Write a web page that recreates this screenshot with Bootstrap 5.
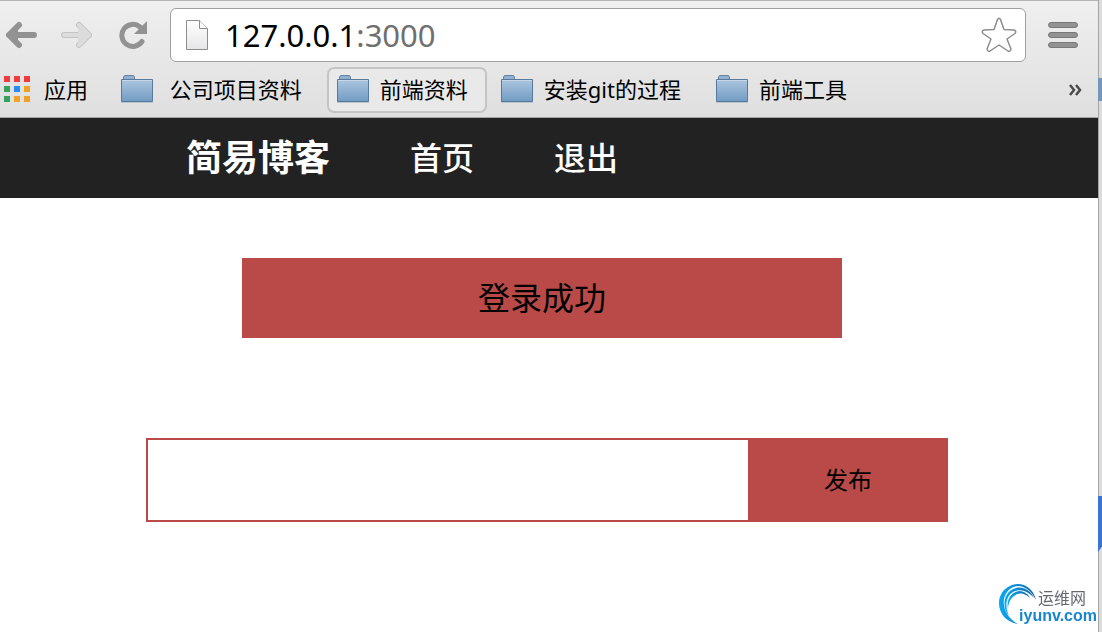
<!DOCTYPE html>
<html lang="zh-CN">
<head>
<meta charset="utf-8">
<meta name="viewport" content="width=device-width, initial-scale=1">
<title>简易博客</title>
<link href="https://cdn.jsdelivr.net/npm/bootstrap@5.3.0/dist/css/bootstrap.min.css" rel="stylesheet">
<style>
  body { font-family: "Noto Sans", "Noto Sans CJK SC", sans-serif; color: #000; background: #fff; }
  svg { display: block; flex: none; }
  .chrome { background: linear-gradient(#efefef, #dfdfdf); border-top: 1px solid #b5b5b5; border-bottom: 1px solid #a5a5a5; }
  .tools { height: 66px; padding: 6px 20px 4px 5px; }
  .tool-btn { border: 0; background: none; padding: 0; }
  .tool-forward { margin-left: 21px; }
  .tool-reload { margin-left: 25px; }
  .omnibox { height: 54px; border: 1px solid #a0a0a0; border-radius: 6px; background: #fff; margin: 0 22px; padding: 0 8px 0 14px; }
  .address { font-size: 31px; line-height: 52px; margin-left: 16px; }
  .port { color: #707070; }
  .bookmarks { height: 50px; padding-bottom: 4px; font-size: 22px; line-height: 32px; }
  .bookmark { height: 46px; padding: 0 19px 3px 8px; gap: 11px; border: 2px solid transparent; border-radius: 7px; color: #000; text-decoration: none; white-space: nowrap; }
  .bookmark.hot { border-color: #c4c4c4; background: #e9e9e9; padding-right: 17px; }
  .bookmark.apps { padding-left: 2px; padding-right: 17px; gap: 14px; }
  .site-nav { background: #222; height: 80px; padding: 0 186px; gap: 80px; }
  .site-nav a { color: #fff; text-decoration: none; font-size: 32px; font-weight: 500; white-space: nowrap; }
  .site-nav .site-name { font-size: 36px; font-weight: 700; }
  .notice-row { padding: 60px 14px 0 0; }
  .notice { width: 100%; max-width: 600px; height: 80px; background: #b94a48; font-size: 32px; }
  .post-row { padding: 100px 4px 0 0; }
  .post { width: 100%; max-width: 802px; height: 84px; }
  .post input { min-width: 0; border: 2px solid #b94a48; border-right: 0; border-radius: 0; padding: 0 16px; font-size: 24px; outline: 0; }
  .post button { width: 200px; border: 0; background: #b94a48; color: #000; font-size: 24px; }
  .edge { width: 4px; background: linear-gradient(90deg, #a5a5a5 1px, #dcdcdc 1px); }
  .edge-top { height: 78px; }
  .edge-folder { height: 23px; background: #7197bd; }
  .edge-gap { height: 395px; }
  .edge-blue { height: 56px; background: #3b73d1; clip-path: polygon(0 0, 100% 0, 100% 90%, 0 100%); }
  .watermark { right: 5px; bottom: 7px; }
  .swirl { left: -20px; bottom: 0; }
  .mark-cn { padding-right: 11px; font-size: 16px; line-height: 18px; color: #666870; }
  .mark-url { font: bold 16px/18px "Liberation Sans", sans-serif; color: #1785d1; }
</style>
</head>
<body>
<svg width="0" height="0" class="position-absolute" aria-hidden="true">
  <defs>
    <linearGradient id="folderFill" x2="0" y2="1"><stop stop-color="#adc6df"/><stop offset="1" stop-color="#729bc3"/></linearGradient>
    <linearGradient id="pageFill" x2="0" y2="1"><stop stop-color="#fff"/><stop offset="1" stop-color="#e6e6e8"/></linearGradient>
    <linearGradient id="swirlFill" x2="1"><stop stop-color="#08a9f4"/><stop offset="1" stop-color="#1566a9"/></linearGradient>
    <symbol id="folder" viewBox="0 0 32 28"><path d="M2.500 5V2l1-1.500h9l1 1.500v3" fill="#91afd1" stroke="#66829f"/><path d="M.5 4.500h31v22H.5z" fill="url(#folderFill)" stroke="#56799c"/><path d="M1 5.500h30" stroke="#c6d8e9"/><path d="M0 27.500h32" stroke="#bbc3cb"/></symbol>
  </defs>
</svg>
<div class="d-flex min-vh-100 overflow-hidden">
  <div class="flex-grow-1 position-relative">
    <header class="chrome">
      <div class="tools d-flex align-items-center">
        <button class="tool-btn" type="button" aria-label="后退"><svg width="34" height="30" viewBox="0 0 34 30" fill="none" stroke="#929292" stroke-width="6" stroke-linecap="round" stroke-linejoin="round"><path d="M4 15h25M14 5 4 15l10 10"/><path d="M4 15 13 6v18z" fill="#929292" stroke="none"/></svg></button>
        <button class="tool-btn tool-forward" type="button" aria-label="前进"><svg width="34" height="30" viewBox="0 0 34 30" fill="none" stroke-linecap="round" stroke-linejoin="round"><path d="M4 15h25M19 5l10 10-10 10" stroke="#c4c4c4" stroke-width="6"/><path d="M4 15h25M19 5l10 10-10 10" stroke="#dcdcdc" stroke-width="4"/><path d="m18 7 9 8-9 8z" fill="#dcdcdc"/></svg></button>
        <button class="tool-btn tool-reload" type="button" aria-label="重新加载"><svg width="29" height="30" viewBox="0 0 29 30"><path d="M23 21.500A11 11 0 1 1 21 7" fill="none" stroke="#929292" stroke-width="5" stroke-linecap="round"/><path d="M28 1v13H15z" fill="#929292"/></svg></button>
        <div class="omnibox d-flex align-items-center flex-grow-1">
          <svg width="24" height="32" viewBox="0 0 24 32"><path d="M1.500 1.500h13l8 8v21h-21z" fill="url(#pageFill)" stroke="#8d8d8d"/><path d="M14.500 1.500v8h8" fill="#fff" stroke="#8d8d8d"/></svg>
          <span class="address flex-grow-1">127.0.0.1<span class="port">:3000</span></span>
          <button class="tool-btn" type="button" aria-label="收藏"><svg width="36" height="36" viewBox="0 0 36 36"><path d="M16.500 2.500Q18 0 19.500 2.500L23 12.500 33 13Q36 14 34 16.500L26 22 30 32Q29.500 35 27 34L18 28 9 34Q6.500 35 6 32L10 22 2 16.500Q0 14 3 13L13 12.500z" fill="#fff" stroke="#8d8d8d" stroke-width="1.500" stroke-linejoin="round"/></svg></button>
        </div>
        <button class="tool-btn" type="button" aria-label="菜单"><svg width="30" height="28" viewBox="0 0 30 28" stroke="#787878" fill="#929292"><rect x=".5" y="1.500" width="29" height="5" rx="2.500"/><rect x=".5" y="11.500" width="29" height="5" rx="2.500"/><rect x=".5" y="21.500" width="29" height="5" rx="2.500"/></svg></button>
      </div>
      <nav class="bookmarks d-flex align-items-center gap-1" aria-label="书签">
        <a class="bookmark apps d-flex align-items-center" href="#"><svg width="26" height="26" viewBox="0 0 26 26"><path fill="#ef3b3b" d="M0 0h6v6H0zM10 0h6v6h-6zM20 0h6v6h-6z"/><path fill="#35a15b" d="M0 10h6v6H0zM0 20h6v6H0z"/><path fill="#278cf0" d="M10 10h6v6h-6z"/><path fill="#f0a126" d="M20 10h6v6h-6zM10 20h6v6h-6zM20 20h6v6h-6z"/></svg>应用</a>
        <a class="bookmark d-flex align-items-center" href="#"><svg width="32" height="28"><use href="#folder"/></svg><span>&nbsp;公司项目资料</span></a>
        <a class="bookmark hot d-flex align-items-center" href="#"><svg width="32" height="28"><use href="#folder"/></svg>前端资料</a>
        <a class="bookmark d-flex align-items-center" href="#"><svg width="32" height="28"><use href="#folder"/></svg>安装git的过程</a>
        <a class="bookmark d-flex align-items-center" href="#"><svg width="32" height="28"><use href="#folder"/></svg>前端工具</a>
        <button class="tool-btn ms-auto me-3" type="button" aria-label="更多书签"><svg width="13" height="12" viewBox="0 0 13 12" fill="none" stroke="#4c4c4c" stroke-width="2.500"><path d="m1 1 4 5-4 5M7 1l4 5-4 5"/></svg></button>
      </nav>
    </header>
    <nav class="site-nav d-flex align-items-center" aria-label="网站导航">
      <a class="site-name" href="#">简易博客</a>
      <a href="#">首页</a>
      <a href="#">退出</a>
    </nav>
    <main>
      <div class="notice-row d-flex justify-content-center">
        <div class="notice d-flex align-items-center justify-content-center" role="status">登录成功</div>
      </div>
      <div class="post-row d-flex justify-content-center">
        <form class="post d-flex">
          <input class="flex-grow-1" type="text" aria-label="内容">
          <button type="button">发布</button>
        </form>
      </div>
    </main>
  </div>
  <div class="edge flex-shrink-0" aria-hidden="true">
    <div class="edge-top"></div><div class="edge-folder"></div><div class="edge-gap"></div><div class="edge-blue"></div>
  </div>
</div>
<div class="watermark position-fixed d-flex flex-column align-items-end">
  <svg class="swirl position-absolute" width="42" height="42" viewBox="0 0 42 42" fill="url(#swirlFill)"><path d="M19 41C-2 38-6 13 9 4 20-3 34 3 37 17 31 5 20-1 11 6 0 15 4 33 19 41z"/><path d="M10 33C2 23 5 8 17 5c9-2 15 4 18 10C29 8 21 5 14 9 6 14 6 24 10 33z"/><path d="M9 26C7 17 12 9 20 8c6 0 10 4 11 7-5-5-11-6-16-2-4 3-6 8-6 13z"/></svg>
  <span class="mark-cn">运维网</span>
  <span class="mark-url">iyunv.com</span>
</div>
<script src="https://cdn.jsdelivr.net/npm/bootstrap@5.3.0/dist/js/bootstrap.bundle.min.js"></script>
</body>
</html>
